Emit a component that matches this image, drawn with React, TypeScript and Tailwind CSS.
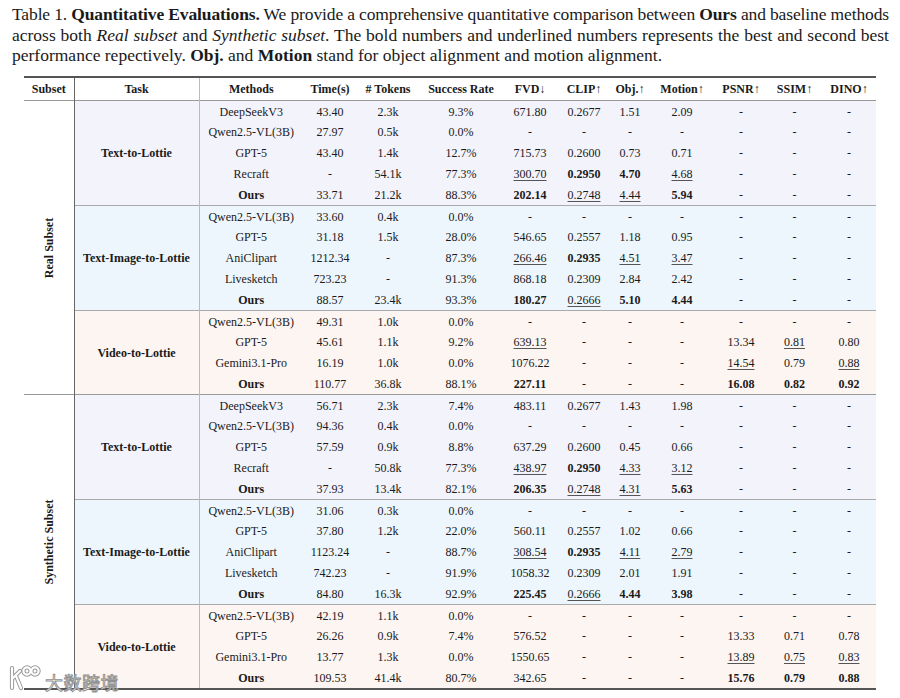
type Block = {
  task: string
  bg: string
  rows: string[][]
}

type Section = {
  label: string
  blocks: Block[]
}

// "*" prefix = bold (best), "_" prefix = underline (second best)
const sections: Section[] = [
  {
    label: 'Real Subset',
    blocks: [
      {
        task: 'Text-to-Lottie',
        bg: 'bg-[#f3f3fc]',
        rows: [
          ['DeepSeekV3', '43.40', '2.3k', '9.3%', '671.80', '0.2677', '1.51', '2.09', '-', '-', '-'],
          ['Qwen2.5-VL(3B)', '27.97', '0.5k', '0.0%', '-', '-', '-', '-', '-', '-', '-'],
          ['GPT-5', '43.40', '1.4k', '12.7%', '715.73', '0.2600', '0.73', '0.71', '-', '-', '-'],
          ['Recraft', '-', '54.1k', '77.3%', '_300.70', '*0.2950', '*4.70', '_4.68', '-', '-', '-'],
          ['*Ours', '33.71', '21.2k', '88.3%', '*202.14', '_0.2748', '_4.44', '*5.94', '-', '-', '-'],
        ],
      },
      {
        task: 'Text-Image-to-Lottie',
        bg: 'bg-[#edf6fc]',
        rows: [
          ['Qwen2.5-VL(3B)', '33.60', '0.4k', '0.0%', '-', '-', '-', '-', '-', '-', '-'],
          ['GPT-5', '31.18', '1.5k', '28.0%', '546.65', '0.2557', '1.18', '0.95', '-', '-', '-'],
          ['AniClipart', '1212.34', '-', '87.3%', '_266.46', '*0.2935', '_4.51', '_3.47', '-', '-', '-'],
          ['Livesketch', '723.23', '-', '91.3%', '868.18', '0.2309', '2.84', '2.42', '-', '-', '-'],
          ['*Ours', '88.57', '23.4k', '93.3%', '*180.27', '_0.2666', '*5.10', '*4.44', '-', '-', '-'],
        ],
      },
      {
        task: 'Video-to-Lottie',
        bg: 'bg-[#fcf5f2]',
        rows: [
          ['Qwen2.5-VL(3B)', '49.31', '1.0k', '0.0%', '-', '-', '-', '-', '-', '-', '-'],
          ['GPT-5', '45.61', '1.1k', '9.2%', '_639.13', '-', '-', '-', '13.34', '_0.81', '0.80'],
          ['Gemini3.1-Pro', '16.19', '1.0k', '0.0%', '1076.22', '-', '-', '-', '_14.54', '0.79', '_0.88'],
          ['*Ours', '110.77', '36.8k', '88.1%', '*227.11', '-', '-', '-', '*16.08', '*0.82', '*0.92'],
        ],
      },
    ],
  },
  {
    label: 'Synthetic Subset',
    blocks: [
      {
        task: 'Text-to-Lottie',
        bg: 'bg-[#f3f3fc]',
        rows: [
          ['DeepSeekV3', '56.71', '2.3k', '7.4%', '483.11', '0.2677', '1.43', '1.98', '-', '-', '-'],
          ['Qwen2.5-VL(3B)', '94.36', '0.4k', '0.0%', '-', '-', '-', '-', '-', '-', '-'],
          ['GPT-5', '57.59', '0.9k', '8.8%', '637.29', '0.2600', '0.45', '0.66', '-', '-', '-'],
          ['Recraft', '-', '50.8k', '77.3%', '_438.97', '*0.2950', '_4.33', '_3.12', '-', '-', '-'],
          ['*Ours', '37.93', '13.4k', '82.1%', '*206.35', '_0.2748', '_4.31', '*5.63', '-', '-', '-'],
        ],
      },
      {
        task: 'Text-Image-to-Lottie',
        bg: 'bg-[#edf6fc]',
        rows: [
          ['Qwen2.5-VL(3B)', '31.06', '0.3k', '0.0%', '-', '-', '-', '-', '-', '-', '-'],
          ['GPT-5', '37.80', '1.2k', '22.0%', '560.11', '0.2557', '1.02', '0.66', '-', '-', '-'],
          ['AniClipart', '1123.24', '-', '88.7%', '_308.54', '*0.2935', '_4.11', '_2.79', '-', '-', '-'],
          ['Livesketch', '742.23', '-', '91.9%', '1058.32', '0.2309', '2.01', '1.91', '-', '-', '-'],
          ['*Ours', '84.80', '16.3k', '92.9%', '*225.45', '_0.2666', '*4.44', '*3.98', '-', '-', '-'],
        ],
      },
      {
        task: 'Video-to-Lottie',
        bg: 'bg-[#fcf5f2]',
        rows: [
          ['Qwen2.5-VL(3B)', '42.19', '1.1k', '0.0%', '-', '-', '-', '-', '-', '-', '-'],
          ['GPT-5', '26.26', '0.9k', '7.4%', '576.52', '-', '-', '-', '13.33', '0.71', '0.78'],
          ['Gemini3.1-Pro', '13.77', '1.3k', '0.0%', '1550.65', '-', '-', '-', '_13.89', '_0.75', '_0.83'],
          ['*Ours', '109.53', '41.4k', '80.7%', '342.65', '-', '-', '-', '*15.76', '*0.79', '*0.88'],
        ],
      },
    ],
  },
]

const headers = ['Methods', 'Time(s)', '# Tokens', 'Success Rate', 'FVD↓', 'CLIP↑', 'Obj.↑', 'Motion↑', 'PSNR↑', 'SSIM↑', 'DINO↑']
const widths = [50, 125, 104, 54, 62, 84, 54, 54, 38, 66, 52, 55, 54]

function Cell({ value }: { value: string }) {
  if (value.startsWith('*')) return <span className="font-bold">{value.slice(1)}</span>
  if (value.startsWith('_'))
    return <span className="underline decoration-[#555] underline-offset-[2px]">{value.slice(1)}</span>
  return <span>{value}</span>
}

function Watermark() {
  return (
    <div className="absolute left-[7px] top-[664px] flex items-end gap-[4px]">
      <svg width="34" height="28" viewBox="0 0 34 28" fill="none">
        <g stroke="#9a9a9a" strokeWidth="4.2" strokeLinecap="round" strokeLinejoin="round">
          <path d="M5 4 L5 24 M5 15 L13 7 M9 12 L14 24" />
          <circle cx="20" cy="7" r="3.6" />
          <circle cx="28" cy="7" r="3.6" />
        </g>
        <g stroke="#fff" strokeWidth="2.2" strokeLinecap="round" strokeLinejoin="round">
          <path d="M5 4 L5 24 M5 15 L13 7 M9 12 L14 24" />
          <circle cx="20" cy="7" r="3.6" />
          <circle cx="28" cy="7" r="3.6" />
        </g>
      </svg>
      <span className="pb-[1px] font-['Noto_Sans_CJK_SC',sans-serif] text-[18px] leading-none tracking-[0.5px] text-white [-webkit-text-stroke:0.9px_#8f8f8f]">
        大数跨境
      </span>
    </div>
  )
}

export default function App() {
  return (
    <div className="relative h-[698px] w-[900px] overflow-hidden bg-white font-['Liberation_Serif',serif] text-[#1a1a1a]">
      <div className="w-[889px] pl-[12px] pt-[4px] text-[17.5px] leading-[20.6px]">
        <p className="whitespace-nowrap text-justify tracking-[-0.12px] [word-spacing:-2px] [text-align-last:justify]">
          Table 1. <b>Quantitative Evaluations.</b> We provide a comprehensive quantitative comparison between{' '}
          <b>Ours</b> and baseline methods
        </p>
        <p className="whitespace-nowrap text-justify [text-align-last:justify]">
          across both <i>Real subset</i> and <i>Synthetic subset</i>. The bold numbers and underlined numbers
          represents the best and second best
        </p>
        <p className="whitespace-nowrap">
          performance repectively. <b>Obj.</b> and <b>Motion</b> stand for object alignment and motion alignment.
        </p>
      </div>

      <table className="ml-[24px] mt-[10px] w-[852px] table-fixed border-collapse text-center text-[12px] leading-none">
        <colgroup>
          {widths.map((w, i) => (
            <col key={i} style={{ width: w }} />
          ))}
        </colgroup>
        <thead>
          <tr className="h-[24px] border-t-[2px] border-b border-t-[#555] border-b-[#999]">
            <th className="border-r border-r-[#666] font-bold">Subset</th>
            <th className="border-r border-r-[#bbb] font-bold">Task</th>
            {headers.map((h) => (
              <th key={h} className="font-bold">
                {h}
              </th>
            ))}
          </tr>
        </thead>
        <tbody>
          {sections.map((section, si) =>
            section.blocks.map((block, bi) =>
              block.rows.map((row, ri) => {
                const firstOfBlock = ri === 0
                const firstOfSection = firstOfBlock && bi === 0
                const sectionRows = section.blocks.reduce((n, b) => n + b.rows.length, 0)
                const lastOfTable =
                  si === sections.length - 1 && bi === section.blocks.length - 1 && ri === block.rows.length - 1
                return (
                  <tr
                    key={`${si}-${bi}-${ri}`}
                    className={`h-[21px] ${firstOfSection && si > 0 ? 'border-t border-t-[#999]' : ''} ${lastOfTable ? 'border-b-[2px] border-b-[#555]' : ''}`}
                  >
                    {firstOfSection && (
                      <td rowSpan={sectionRows} className="border-r border-r-[#666] bg-white p-0">
                        <div className="flex h-full items-center justify-center">
                          <span className="-rotate-90 whitespace-nowrap font-bold">{section.label}</span>
                        </div>
                      </td>
                    )}
                    {firstOfBlock && (
                      <td
                        rowSpan={block.rows.length}
                        className={`border-r border-r-[#bbb] font-bold ${block.bg} ${bi > 0 ? 'border-t border-t-[#aaa]' : ''}`}
                      >
                        {block.task}
                      </td>
                    )}
                    {row.map((v, ci) => (
                      <td
                        key={ci}
                        className={`p-0 ${block.bg} ${firstOfBlock && bi > 0 ? 'border-t border-t-[#aaa]' : ''}`}
                      >
                        <Cell value={v} />
                      </td>
                    ))}
                  </tr>
                )
              }),
            ),
          )}
        </tbody>
      </table>

      <Watermark />
    </div>
  )
}
